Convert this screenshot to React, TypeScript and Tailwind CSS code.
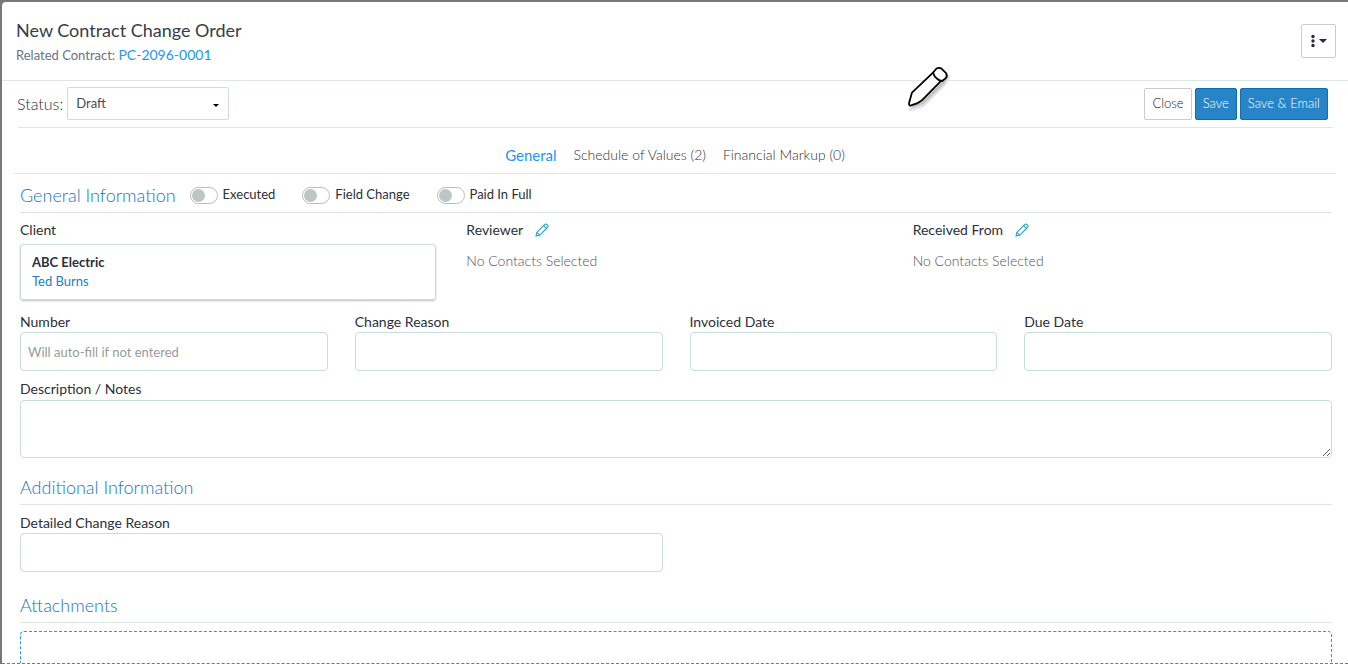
import { useState } from "react";
import type { ReactNode } from "react";

const TABS = ["General", "Schedule of Values (2)", "Financial Markup (0)"];
const FLAGS = ["Executed", "Field Change", "Paid In Full"];

const FIELD =
  "block w-full rounded border border-[#c8dcdc] bg-white px-[7px] text-[13px] text-[#2b2f3a] outline-none placeholder:text-[#9a9a9a] focus:border-[#2185d0]";

function Caret({ className }: { className?: string }) {
  return (
    <svg viewBox="0 0 8 4" className={className} fill="currentColor" aria-hidden>
      <path d="M0 0h8L4 4z" />
    </svg>
  );
}

function PencilIcon() {
  return (
    <svg
      viewBox="0 0 14 14"
      className="h-3.5 w-3.5"
      fill="none"
      stroke="currentColor"
      strokeWidth="1.1"
      strokeLinejoin="round"
      aria-hidden
    >
      <path d="M1 13l.9-3.7 7.6-7.7c.6-.6 1.6-.8 2.3-.1l.7.7c.7.7.6 1.6 0 2.3l-7.7 7.6z" />
      <path d="M8.6 2.5l2.9 2.9M1.9 9.3l2.9 2.8" />
    </svg>
  );
}

/** Large drawing-tool cursor that hovers above the dialog. */
function PenCursor() {
  return (
    <svg
      viewBox="0 0 46 50"
      className="pointer-events-none absolute left-[68%] top-[61px] -ml-3 h-[50px] w-[46px]"
      fill="white"
      stroke="black"
      strokeWidth="1.8"
      strokeLinejoin="round"
      aria-hidden
    >
      <path
        d="M6 46L18 42 39 21 43 14"
        fill="none"
        stroke="#e6dee8"
        strokeWidth="4"
        strokeLinecap="round"
      />
      <path
        d="M8 43L18 39.5 38 20 41.5 14"
        fill="none"
        stroke="#c3c4bd"
        strokeWidth="3"
        strokeLinecap="round"
      />
      <path d="M4.6 42.4q-.8-1-.5-2.6L7 29.6 28 9.6l8.6 7.8L16.6 37.6 12 40.4 6.6 42.2q-1.2.6-2 .2z" />
      <path d="M28 9.8l3.2-4q2.6-1.8 5-.4l4.6 4.4q1.8 2.6.4 5l-4 3.2q-2.6 0-4.8-2-3.4-2.6-4.4-6.2z" />
    </svg>
  );
}

function SectionTitle({ children }: { children: ReactNode }) {
  return <h2 className="text-[18px] leading-6 font-light text-[#1678bd]">{children}</h2>;
}

function Field({
  id,
  label,
  placeholder,
}: {
  id: string;
  label: string;
  placeholder?: string;
}) {
  return (
    <div>
      <label htmlFor={id} className="block text-[14px] leading-5">
        {label}
      </label>
      <input id={id} type="text" placeholder={placeholder} className={`${FIELD} h-[39px]`} />
    </div>
  );
}

function ContactPicker({ label }: { label: string }) {
  return (
    <div>
      <div className="flex items-center gap-3">
        <span className="text-[14px] leading-5">{label}</span>
        <button type="button" aria-label={`Edit ${label}`} className="text-[#2ba3cb]">
          <PencilIcon />
        </button>
      </div>
      <p className="mt-[11px] text-[14px] leading-5 font-light text-[#4b5260]">
        No Contacts Selected
      </p>
    </div>
  );
}

export default function App() {
  const [tab, setTab] = useState(TABS[0]);

  return (
    <div className="flex h-screen flex-col overflow-hidden bg-[#777] pl-0.5 pt-0.5 font-['Lato',sans-serif] text-[#2b2f3a]">
      <main className="relative min-h-0 flex-1 overflow-hidden rounded-tl-[4px] border-b border-dashed border-[#777] bg-white">
        {/* Title bar */}
        <header className="flex items-start justify-between border-b border-[#dbe6e6] pb-[15px] pl-3.5 pr-3 pt-4">
          <div>
            <h1 className="text-[18px] leading-6 text-[#383d47]">New Contract Change Order</h1>
            <p className="mt-[3px] text-[13px] leading-5 text-[#6b7280]">
              Related Contract:{" "}
              <a href="#contract" className="text-[14px] text-[#2196f3]">
                PC-2096-0001
              </a>
            </p>
          </div>
          <button
            type="button"
            aria-label="More actions"
            className="mt-1.5 flex h-[34px] w-[35px] items-center justify-center gap-1 rounded-xs border border-[#ccc] text-[#222b3a]"
          >
            <svg viewBox="0 0 4 14" className="h-3.5 w-1" fill="currentColor" aria-hidden>
              <circle cx="2" cy="2.5" r="1.7" />
              <circle cx="2" cy="7" r="1.7" />
              <circle cx="2" cy="11.5" r="1.7" />
            </svg>
            <Caret className="h-1 w-2" />
          </button>
        </header>

        {/* Status and actions */}
        <div className="ml-4 mr-[15px] flex items-center justify-between border-b border-[#dfe6e6] pb-[7px] pr-[5px] pt-1.5">
          <div className="flex items-center gap-1">
            <label htmlFor="status" className="-ml-px text-[16px] font-light">
              Status:
            </label>
            <div className="relative">
              <select
                id="status"
                className="h-[33px] w-[162px] appearance-none rounded-xs border border-[#ccdcdc] bg-white pl-2 text-[13px] text-[#454a5c] outline-none"
              >
                <option>Draft</option>
                <option>Approved</option>
              </select>
              <Caret className="pointer-events-none absolute right-2.5 top-[17px] h-[3px] w-1.5 text-black" />
            </div>
          </div>
          <div className="flex gap-[3px] text-[13px] font-light">
            <button
              type="button"
              className="h-8 rounded-xs border border-[#ccc] px-[7px] text-[#222]"
            >
              Close
            </button>
            <button
              type="button"
              className="h-8 rounded-xs border border-[#0f6cb0] bg-[#2785c7] px-[7px] text-white"
            >
              Save
            </button>
            <button
              type="button"
              className="h-8 rounded-xs border border-[#0f6cb0] bg-[#2785c7] px-[7px] text-white"
            >
              Save &amp; Email
            </button>
          </div>
        </div>

        <nav className="mx-3 flex justify-center gap-[17px] border-b border-[#dfe6e6] pb-2 pt-[17px]">
          {TABS.map((t) => (
            <button
              key={t}
              type="button"
              onClick={() => setTab(t)}
              className={
                t === tab
                  ? "text-[15px] leading-5 text-[#2196f3]"
                  : "text-[14px] leading-5 font-light text-[#333]"
              }
            >
              {t}
            </button>
          ))}
        </nav>

        <form className="pl-[18px] pr-4">
          {/* General information */}
          <div className="flex items-center border-b border-[#dbe6e6] pb-[5px] pt-[9px]">
            <SectionTitle>General Information</SectionTitle>
            <div className="ml-3.5 flex gap-[27px]">
              {FLAGS.map((flag) => (
                <label key={flag} className="flex items-center gap-[5px] text-[13px]">
                  <input
                    type="checkbox"
                    className="h-[17px] w-7 appearance-none rounded-full border border-[#bbb] bg-white p-px before:block before:h-[13px] before:w-[13px] before:rounded-full before:bg-[#bcc6c6] checked:before:ml-[11px] checked:before:bg-[#2185d0]"
                  />
                  {flag}
                </label>
              ))}
            </div>
          </div>

          <div className="mt-[7px] grid grid-cols-3 gap-[27px]">
            <div>
              <span className="block text-[14px] leading-5">Client</span>
              <div className="mr-[3px] mt-1 rounded-[3px] border border-[#ccdcdc] px-[11px] py-2 text-[13px] leading-[19px] shadow-[0_1px_2px_rgba(0,0,0,0.25)]">
                <div className="font-bold">ABC Electric</div>
                <a href="#client" className="text-[#1b80c4]">
                  Ted Burns
                </a>
              </div>
            </div>
            <ContactPicker label="Reviewer" />
            <ContactPicker label="Received From" />
          </div>

          <div className="mt-3 grid grid-cols-4 gap-[27px]">
            <Field id="number" label="Number" placeholder="Will auto-fill if not entered" />
            <Field id="reason" label="Change Reason" />
            <Field id="invoiced" label="Invoiced Date" />
            <Field id="due" label="Due Date" />
          </div>

          <div className="mt-2">
            <label htmlFor="notes" className="block pb-px text-[14px] leading-5">
              Description / Notes
            </label>
            <textarea id="notes" className={`${FIELD} h-[58px] resize-y`} />
          </div>

          {/* Additional information */}
          <div className="mt-[17px] border-b border-[#dbe6e6] pb-[5px]">
            <SectionTitle>Additional Information</SectionTitle>
          </div>
          <div className="mt-2 grid grid-cols-2 gap-[27px]">
            <Field id="detailed" label="Detailed Change Reason" />
          </div>

          {/* Attachments */}
          <div className="mt-[21px] border-b border-[#dbe6e6] pb-[5px]">
            <SectionTitle>Attachments</SectionTitle>
          </div>
          <div className="mt-2 h-24 rounded border border-dashed border-[#2196f3]" />
        </form>

        <PenCursor />
      </main>
    </div>
  );
}
